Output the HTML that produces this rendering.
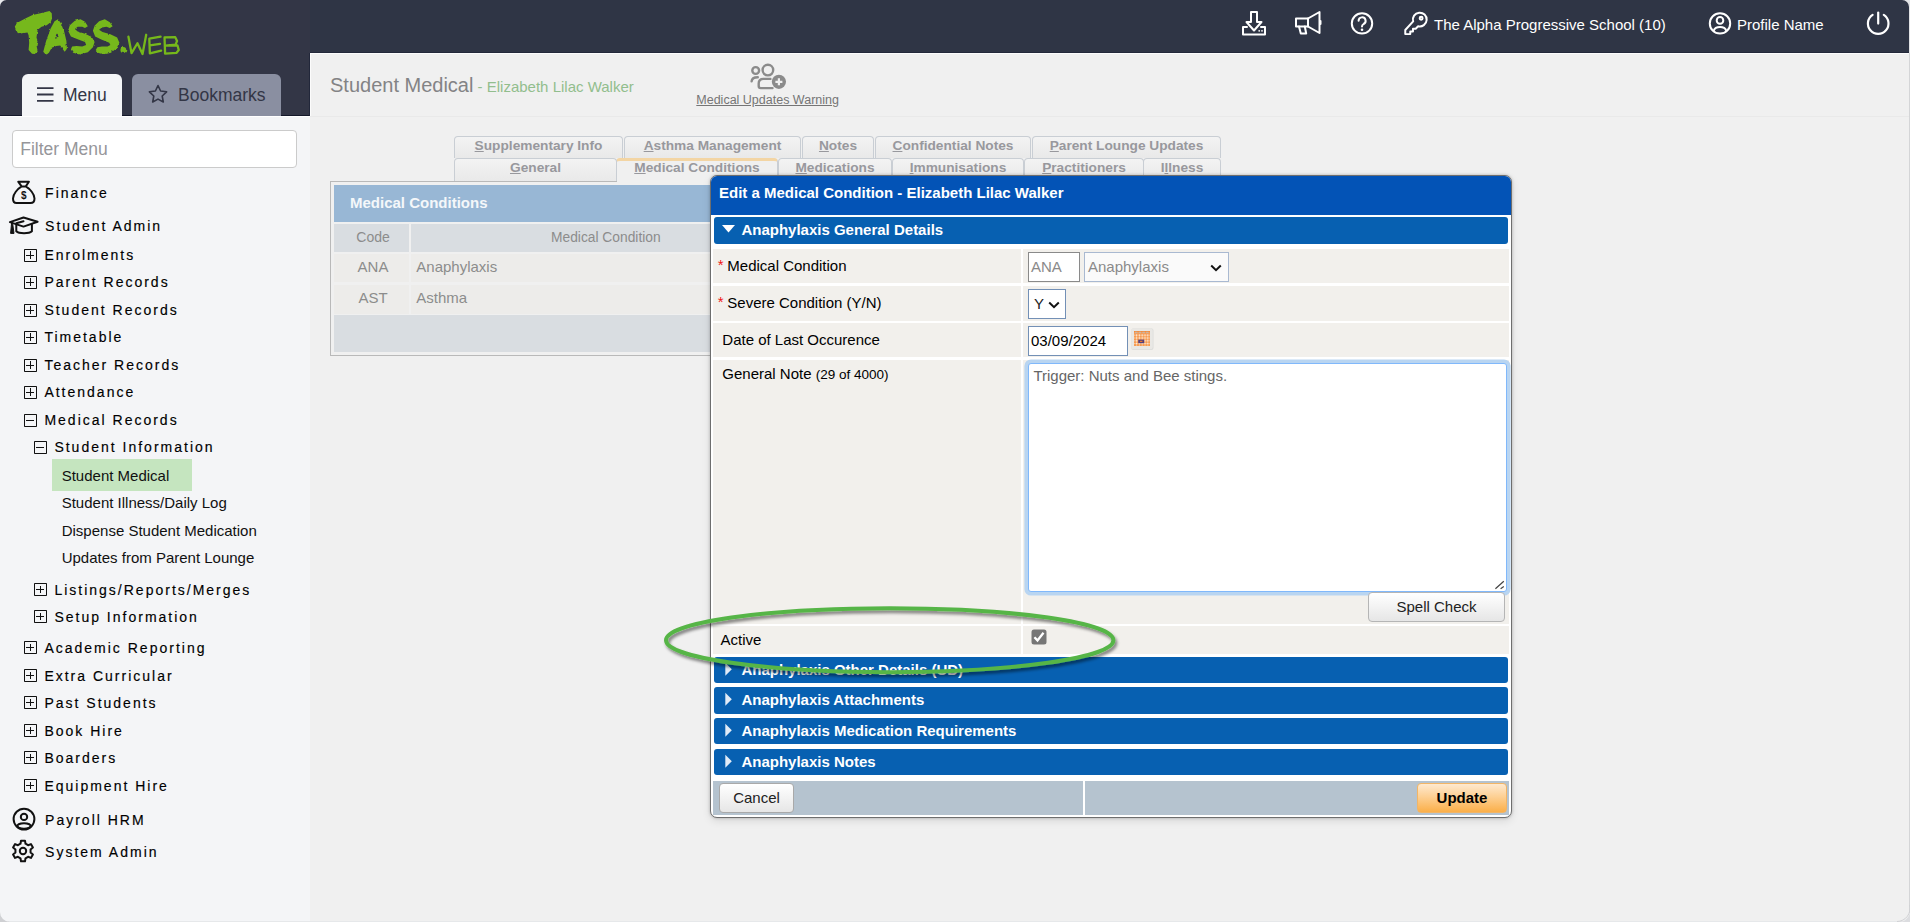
<!DOCTYPE html>
<html>
<head>
<meta charset="utf-8">
<title>Student Medical</title>
<style>
*{box-sizing:border-box;margin:0;padding:0}
html,body{width:1910px;height:922px;overflow:hidden}
body{font-family:"Liberation Sans",sans-serif;background:#f0f0f0;position:relative;color:#000}
.abs{position:absolute}
#hdr{position:absolute;left:0;top:0;width:1910px;height:53px;background:linear-gradient(90deg,#333646 0,#333646 310px,#2f3545 310px)}
#hl2{position:absolute;left:310px;top:52px;width:1600px;height:1px;background:#23283a}
#sidehdr{position:absolute;left:0;top:53px;width:310px;height:63px;background:#333646;border-bottom:1px solid #14182a;border-right:1px solid #22273a}
#side{position:absolute;left:0;top:116px;width:310px;height:806px;background:#f4f5f7;border-top:1px solid #fff}
.tabM{position:absolute;left:22px;top:74px;width:100px;height:42px;background:#f4f5f7;border-radius:6px 6px 0 0;color:#333646;font-size:17.5px}
.tabB{position:absolute;left:132px;top:74px;width:148px;height:42px;background:#8a8fa1;border-radius:6px 6px 0 0;color:#333646;font-size:17.5px}
.tabM span,.tabB span{position:absolute;top:10px;line-height:22px;white-space:nowrap}
#filter{position:absolute;left:12px;top:130px;width:285px;height:38px;border:1px solid #cbcbcb;border-radius:4px;background:#fff;font-size:17.500px;color:#96969a;line-height:37.500px;padding-left:7.200px}
.mi{position:absolute;white-space:nowrap;font-size:14px;letter-spacing:2px;line-height:20px;color:#000;-webkit-text-stroke:0.150px #000;margin:-1.200px 0 0 0.400px}
.leaf{position:absolute;white-space:nowrap;font-size:15px;line-height:20px;color:#111;left:61.700px}
.bx{position:absolute;width:13.300px;height:13px;border:1.300px solid #111;border-radius:0.800px;margin-top:-0.700px}
.bx:before{content:"";position:absolute;left:1.350px;top:4.700px;width:8px;height:1.300px;background:#111}
.bx.p:after{content:"";position:absolute;left:4.700px;top:1.300px;width:1.300px;height:7.800px;background:#111}
.hl{position:absolute;left:52px;top:459px;width:140px;height:32px;background:#c5e5bf}
.ht{position:absolute;color:#fff;font-size:15px;line-height:20px;white-space:nowrap;top:15px}

#title{position:absolute;left:330px;top:72px;font-size:20px;line-height:26px;color:#838385;white-space:nowrap}
#title span{font-size:15px;color:#92be8d}
#sep{position:absolute;left:310px;top:116px;width:1600px;height:1px;background:#e9e9e9}
#wl1{position:absolute;left:310px;top:53px;width:1600px;height:1px;background:#fcfcfc}
#wl2{position:absolute;left:310px;top:53px;width:1px;height:63px;background:#fcfcfc}
#muw{position:absolute;left:696.300px;top:93.100px;font-size:12.500px;line-height:14px;color:#757575;text-decoration:underline;white-space:nowrap}
.tb{position:absolute;height:22px;border:1px solid #c9ced4;border-bottom:none;border-radius:4px 4px 0 0;background:linear-gradient(#f3f3f3,#e9e9e9);font-size:13.700px;font-weight:bold;color:#98989d;text-align:center;line-height:17px;white-space:nowrap}
.tb u{text-decoration:underline}
.tb.act{background:#f0f0f0;border-top:3px solid #f3d5a4;line-height:13px;z-index:2}
#mcbox{position:absolute;left:330px;top:181px;width:800px;height:175px;border:1px solid #b9b9b9;background:#f0f0f0}
.c{position:absolute;white-space:nowrap}

#modal{z-index:10;position:absolute;left:710px;top:175px;width:802px;height:643px;border:1px solid #6e6e6e;border-radius:7px;background:#fff;box-shadow:0 0 3px rgba(0,0,0,.25),0 3px 8px rgba(0,0,0,.100);overflow:hidden}
#mtitle{position:absolute;left:0;top:0;width:800px;height:39px;background:#0353b6;color:#fff;font-weight:bold;font-size:15px;line-height:34.600px;padding-left:8px}
.sec{position:absolute;left:3px;width:794px;height:26px;background:#0760b1;border-radius:3px;color:#fff;font-weight:bold;font-size:15px;line-height:26px;padding-left:27.400px;white-space:nowrap}
.sec svg{position:absolute;left:7px;top:0}
.lab{position:absolute;left:2px;width:308px;background:#f2f0ec;font-size:15px;color:#000;white-space:nowrap}
.val{position:absolute;left:312px;width:486px;background:#f2f0ec}
.lab .r{color:#f01616;position:absolute;left:4.800px;margin-top:-1px}
.inp{position:absolute;border:1px solid #7390b6;background:#fff;font-size:15px;line-height:28px;padding-left:2px;white-space:nowrap}
.btn{position:absolute;border:1px solid #b5b5b5;border-radius:4px;background:linear-gradient(#ffffff,#e6e6e6);font-size:15px;color:#222;text-align:center;white-space:nowrap}
</style>
</head>
<body>
<!-- HEADER -->
<div id="hdr"></div>
<!-- logo -->
<svg class="abs" style="left:0;top:0;z-index:2" width="200" height="64" viewBox="0 0 200 64">
 <defs><filter id="rough" x="-5%" y="-10%" width="110%" height="120%"><feTurbulence type="fractalNoise" baseFrequency="0.280" numOctaves="1" seed="11" result="n"/><feDisplacementMap in="SourceGraphic" in2="n" scale="2.600" xChannelSelector="R" yChannelSelector="G"/></filter></defs>
 <g fill="#76b81b" stroke="none" fill-rule="evenodd" filter="url(#rough)">
  <path d="M14.79,26.87 L16.77,22.92 L25.79,18.13 L32.56,15.02 L41.58,13.05 L49.48,11.08 L51.74,13.33 L52.02,18.41 L50.61,22.36 L46.66,25.18 L41.58,26.87 L37.64,29.69 L36.51,37.58 L37.64,40.97 L36.51,45.48 L37.64,51.12 L34.82,53.94 L32.00,53.66 L28.61,49.99 L29.18,42.66 L28.61,35.33 L27.48,32.51 L24.10,33.07 L18.46,34.20 L15.64,29.12 Z M57.94,19.25 L60.76,22.92 L64.15,31.38 L66.40,40.97 L66.97,48.87 L64.71,51.69 L62.45,48.87 L60.20,45.48 L56.25,46.05 L51.74,47.74 L48.92,52.81 L46.10,55.07 L43.28,51.69 L46.10,40.97 L50.61,28.56 L54.56,21.23 Z M55.12,38.71 L58.51,37.87 L57.66,33.64 L56.25,34.20 Z M87.83,26.30 L85.01,21.79 L80.50,19.25 L74.86,20.66 L69.79,25.18 L68.09,30.82 L70.91,36.46 L77.68,39.28 L85.01,42.10 L86.14,44.92 L82.19,46.61 L76.55,46.05 L72.04,46.61 L70.91,49.43 L73.17,52.81 L79.37,54.51 L87.83,52.25 L92.91,47.17 L94.60,42.10 L91.78,37.02 L85.01,33.64 L77.68,31.38 L74.86,29.12 L77.68,26.87 L82.19,26.87 L85.01,28.00 Z M112.64,26.30 L109.82,22.36 L104.74,19.25 L99.10,21.23 L94.59,25.74 L92.90,30.82 L95.15,36.46 L101.92,39.84 L109.25,42.66 L110.38,44.92 L107.56,46.61 L101.92,46.61 L97.41,47.17 L95.72,49.99 L97.97,52.81 L103.61,54.51 L110.94,52.81 L116.58,48.30 L119.40,42.66 L117.15,37.58 L110.38,34.20 L102.48,31.94 L99.10,29.69 L101.92,27.43 L106.43,26.87 L109.82,28.00 Z"/>
  <circle cx="123.35" cy="49.99" r="2.900"/>
 </g>
 <g fill="none" stroke="#76b81b" stroke-width="2.300" stroke-linejoin="round" stroke-linecap="round">
  <path d="M128.43,36.74 L131.53,53.10 L137.45,43.23 L142.53,53.94 L146.20,34.76 M160.58,36.74 L149.30,38.71 L149.86,53.38 L161.14,50.56 M149.86,45.48 L160.01,43.79 M165.09,53.66 L164.53,37.47 L175.24,37.13 L177.05,40.97 L175.52,44.64 L165.65,45.59 L177.50,45.48 L178.74,49.99 L176.37,52.93 L165.09,53.66"/>
 </g>
</svg>
<!-- header icons -->
<svg class="abs" style="left:1241px;top:10px" width="26" height="26" viewBox="0 0 26 26" fill="none" stroke="#fff" stroke-width="2" stroke-linejoin="round" stroke-linecap="round">
 <path d="M10,2 h6 v10 h4.500 l-7.500,8.500 l-7.500,-8.500 h4.500 z"/>
 <path d="M6,17 H2 V24.500 H24 V17 H20"/>
 <path d="M18.200,20.800 h0.010 M21,20.800 h0.010" stroke-width="1.800"/>
</svg>
<svg class="abs" style="left:1294px;top:10.400px" width="28" height="26" viewBox="0 0 28 26" fill="none" stroke="#fff" stroke-width="2" stroke-linejoin="round" stroke-linecap="round">
 <path d="M2,8.500 h12 L25.500,2 V23 L14,16.500 H2 Z"/>
 <path d="M14,8.500 V16.500"/>
 <path d="M5,16.500 l1.800,7 h5.400 l-1.400,-7"/>
 <path d="M26.500,11 v3"/>
</svg>
<svg class="abs" style="left:1349px;top:11px" width="26" height="26" viewBox="0 0 26 26" fill="none" stroke="#fff" stroke-width="2" stroke-linejoin="round" stroke-linecap="round">
 <circle cx="13" cy="12.400" r="10.200"/>
 <path d="M9.600,9.800 a3.500,3.500 0 1 1 5,3.200 c-1,0.600 -1.600,1.200 -1.600,2.600"/>
 <path d="M13,18.800 h0.010" stroke-width="2.600"/>
</svg>
<svg class="abs" style="left:1403.300px;top:10.600px" width="25.400" height="25.400" viewBox="0 0 28 28" fill="none" stroke="#fff" stroke-width="2.200" stroke-linejoin="round" stroke-linecap="round">
 <path d="M11.200,11.500 a7.600,7.600 0 1 1 5.500,5.300 l-2.700,2.700 h-3 v3 h-3 v3 h-5.500 v-4.500 z"/>
 <circle cx="20" cy="8" r="1.600"/>
</svg>
<div class="ht" style="left:1434px">The Alpha Progressive School (10)</div>
<svg class="abs" style="left:1706.500px;top:10px" width="26" height="28" viewBox="0 0 26 28" fill="none" stroke="#fff" stroke-width="2" stroke-linejoin="round" stroke-linecap="round">
 <circle cx="13" cy="13.400" r="10.200"/>
 <circle cx="13" cy="10.400" r="3.300"/>
 <path d="M6.600,20.800 c1,-2.800 3.200,-3.800 6.400,-3.800 s5.400,1 6.400,3.800"/>
</svg>
<div class="ht" style="left:1737px">Profile Name</div>
<svg class="abs" style="left:1864px;top:9px" width="28" height="28" viewBox="0 0 28 28" fill="none" stroke="#fff" stroke-width="2.200" stroke-linecap="round">
 <path d="M14.200,3.500 V14.600"/>
 <path d="M8.600,5.860 a10.300,10.300 0 1 0 11.200,0"/>
</svg>
<div id="sidehdr"></div>
<div id="side"></div>
<div class="tabM"><svg class="abs" style="left:15px;top:13px" width="17" height="15" viewBox="0 0 17 15" stroke="#333646" stroke-width="1.800" fill="none"><path d="M0,1.200 H16.500 M0,7.500 H16.500 M0,13.800 H16.500"/></svg><span style="left:41px">Menu</span></div>
<div class="tabB" style="width:149px"><svg class="abs" style="left:16px;top:10px" width="20" height="20" viewBox="0 0 20 20" stroke="#333646" stroke-width="1.600" fill="none" stroke-linejoin="round"><path d="M10,1.500 L12.600,7 L18.600,7.800 L14.200,12 L15.300,18 L10,15.100 L4.700,18 L5.800,12 L1.400,7.800 L7.400,7 Z"/></svg><span style="left:46px">Bookmarks</span></div>
<div id="filter">Filter Menu</div>

<!-- SIDEBAR ITEMS -->
<div id="sbitems">
<svg class="abs" style="left:10px;top:179px" width="28" height="28" viewBox="0 0 28 28" fill="none" stroke="#111" stroke-width="2" stroke-linejoin="round"><path d="M8.200,2.700 H18.900 L15.800,7.400 C20,10 24.500,15 24.500,19.500 C24.500,22.500 23,24 20.500,24 H6.500 C4,24 3,22.500 3,19.500 C3,15 7.500,10 11.600,7.400 Z M11.600,7.400 H15.800"/><text x="13.700" y="19.700" font-family="Liberation Sans, sans-serif" font-size="10" font-weight="bold" fill="#111" stroke="none" text-anchor="middle">$</text></svg>
<svg class="abs" style="left:8px;top:214px" width="32" height="22" viewBox="0 0 32 22" fill="none" stroke="#111" stroke-width="2" stroke-linejoin="round" stroke-linecap="round"><path d="M1.900,8.100 L15.500,3.500 L29.600,7.700 L15.500,12.600 Z"/><path d="M8.300,10.800 V17.200 C11,19.800 21,19.800 23.900,17.200 V10.400"/><path d="M15.500,7.300 L8.300,9.200"/><path d="M3.600,8.800 L2.600,19.400 H6 L4.600,9.200 Z" fill="#111" stroke-width="1"/></svg>
<svg class="abs" style="left:9.500px;top:805px" width="28" height="28" viewBox="0 0 28 28" fill="none" stroke="#111" stroke-width="2"><defs><clipPath id="uc"><circle cx="14" cy="14.100" r="10.400"/></clipPath></defs><circle cx="14" cy="14.100" r="10.400"/><circle cx="14" cy="11.900" r="3.200"/><ellipse cx="14" cy="21" rx="6.600" ry="2.800" clip-path="url(#uc)"/></svg>
<svg class="abs" style="left:9.200px;top:837.200px" width="28" height="28" viewBox="0 0 28 28" fill="none" stroke="#111" stroke-width="2" stroke-linejoin="round"><path d="M11.49,6.72 L12.00,3.69 L16.00,3.69 L16.51,6.72 L19.05,8.19 L21.92,7.11 L23.93,10.58 L21.56,12.53 L21.56,15.47 L23.93,17.42 L21.92,20.89 L19.05,19.81 L16.51,21.28 L16.00,24.31 L12.00,24.31 L11.49,21.28 L8.95,19.81 L6.08,20.89 L4.07,17.42 L6.44,15.47 L6.44,12.53 L4.07,10.58 L6.08,7.11 L8.95,8.19 Z"/><circle cx="14" cy="14" r="3.200"/></svg>
<div class="hl"></div>
<div class="mi" style="left:44.700px;top:184.5px">Finance</div>
<div class="mi" style="left:44.700px;top:217.5px">Student Admin</div>
<div class="bx p" style="left:24px;top:249.5px"></div><div class="mi" style="left:44px;top:246.5px">Enrolments</div>
<div class="bx p" style="left:24px;top:276.5px"></div><div class="mi" style="left:44px;top:273.5px">Parent Records</div>
<div class="bx p" style="left:24px;top:304.5px"></div><div class="mi" style="left:44px;top:301.5px">Student Records</div>
<div class="bx p" style="left:24px;top:331.5px"></div><div class="mi" style="left:44px;top:328.5px">Timetable</div>
<div class="bx p" style="left:24px;top:359.5px"></div><div class="mi" style="left:44px;top:356.5px">Teacher Records</div>
<div class="bx p" style="left:24px;top:386.5px"></div><div class="mi" style="left:44px;top:383.5px">Attendance</div>
<div class="bx " style="left:24px;top:414.5px"></div><div class="mi" style="left:44px;top:411.5px">Medical Records</div>
<div class="bx p" style="left:24px;top:642px"></div><div class="mi" style="left:44px;top:639px">Academic Reporting</div>
<div class="bx p" style="left:24px;top:670px"></div><div class="mi" style="left:44px;top:667px">Extra Curricular</div>
<div class="bx p" style="left:24px;top:697px"></div><div class="mi" style="left:44px;top:694px">Past Students</div>
<div class="bx p" style="left:24px;top:725px"></div><div class="mi" style="left:44px;top:722px">Book Hire</div>
<div class="bx p" style="left:24px;top:752px"></div><div class="mi" style="left:44px;top:749px">Boarders</div>
<div class="bx p" style="left:24px;top:780px"></div><div class="mi" style="left:44px;top:777px">Equipment Hire</div>
<div class="bx " style="left:34px;top:441.5px"></div><div class="mi" style="left:54px;top:438.5px">Student Information</div>
<div class="bx p" style="left:34px;top:584px"></div><div class="mi" style="left:54px;top:581px">Listings/Reports/Merges</div>
<div class="bx p" style="left:34px;top:611px"></div><div class="mi" style="left:54px;top:608px">Setup Information</div>
<div class="leaf" style="top:465.5px">Student Medical</div>
<div class="leaf" style="top:492.5px">Student Illness/Daily Log</div>
<div class="leaf" style="top:520.5px">Dispense Student Medication</div>
<div class="leaf" style="top:547.5px">Updates from Parent Lounge</div>
<div class="mi" style="left:44.700px;top:811px">Payroll HRM</div>
<div class="mi" style="left:44.700px;top:843px">System Admin</div>
</div>

<!-- MAIN -->
<div id="main">
<div id="title">Student Medical<span> - Elizabeth Lilac Walker</span></div>
<svg class="abs" style="left:748px;top:60px" width="42" height="32" viewBox="748 60 42 32" fill="none" stroke="#8b8b8b" stroke-width="2.400" stroke-linecap="round" stroke-linejoin="round">
<circle cx="755.700" cy="70.500" r="3.400"/><path d="M751.600,81.400 C751.800,78.500 754,77.200 757.800,77.200"/>
<circle cx="767.900" cy="70.100" r="5.300"/><path d="M770.400,78.900 H763.500 C760.500,78.900 758.700,80.600 758.700,83.600 V86 C758.700,87.400 759.400,88.100 760.800,88.100 H772.500"/>
<circle cx="778.900" cy="81.800" r="7.100" fill="#8b8b8b" stroke="none"/><path d="M778.900,78.300 v7 M775.400,81.800 h7" stroke="#f0f0f0" stroke-width="2.200" stroke-linecap="butt"/>
</svg>
<div id="muw">Medical Updates Warning</div>
<div id="hl2"></div><div id="sep"></div><div id="wl1"></div><div id="wl2"></div>
<div class="tb" style="left:454px;top:136px;width:169px"><u>S</u>upplementary Info</div>
<div class="tb" style="left:624px;top:136px;width:177px"><u>A</u>sthma Management</div>
<div class="tb" style="left:802px;top:136px;width:72px"><u>N</u>otes</div>
<div class="tb" style="left:875px;top:136px;width:156px"><u>C</u>onfidential Notes</div>
<div class="tb" style="left:1032px;top:136px;width:189px"><u>P</u>arent Lounge Updates</div>
<div class="tb" style="left:454px;top:158px;width:163px;height:23px"><u>G</u>eneral</div>
<div class="tb act" style="left:616px;top:158px;width:162px;height:23px"><u>M</u>edical Conditions</div>
<div class="tb" style="left:778px;top:158px;width:114px;height:23px"><u>M</u>edications</div>
<div class="tb" style="left:892px;top:158px;width:132px;height:23px"><u>I</u>mmunisations</div>
<div class="tb" style="left:1024px;top:158px;width:120px;height:23px"><u>P</u>ractitioners</div>
<div class="tb" style="left:1143px;top:158px;width:78px;height:23px">I<u>l</u>lness</div>
<div class="abs" style="left:617px;top:181px;width:160px;height:1px;background:#f0f0f0;z-index:3"></div>
<div id="mcbox">
<div class="c" style="left:3px;top:3px;width:800px;height:37px;background:#98b7d5;color:#f4f7fa;font-weight:bold;font-size:15px;line-height:35px;padding-left:16px">Medical Conditions</div>
<div class="c" style="left:3px;top:42px;width:75px;height:28px;background:#d9dde1;color:#8c8c8c;font-size:14px;line-height:26px;text-align:center;padding-left:3px">Code</div>
<div class="c" style="left:80px;top:42px;width:720px;height:28px;background:#d9dde1;color:#8c8c8c;font-size:13.800px;line-height:28px;padding-left:140px">Medical Condition</div>
<div class="c" style="left:3px;top:72px;width:75px;height:28px;background:#edecea;color:#8c8c8c;font-size:15px;line-height:26px;text-align:center;padding-left:3px">ANA</div>
<div class="c" style="left:80px;top:72px;width:720px;height:28px;background:#edecea;color:#8c8c8c;font-size:15px;line-height:26px;padding-left:5.300px">Anaphylaxis</div>
<div class="c" style="left:3px;top:102.500px;width:75px;height:29px;background:#edecea;color:#8c8c8c;font-size:15px;line-height:25px;text-align:center;padding-left:3px">AST</div>
<div class="c" style="left:80px;top:102.500px;width:720px;height:29px;background:#edecea;color:#8c8c8c;font-size:15px;line-height:25px;padding-left:5.300px">Asthma</div>
<div class="c" style="left:3px;top:133.300px;width:797px;height:36.700px;background:#d9dde1"></div>
</div>
</div>
</div>

<!-- MODAL -->
<div id="modal">
<div id="mtitle">Edit a Medical Condition - Elizabeth Lilac Walker</div>
<div class="sec" style="top:41px;height:27px"><svg width="16" height="27" viewBox="0 0 16 27"><path d="M1,8 H14 L7.500,15.500 Z" fill="#fff"/></svg>Anaphylaxis General Details</div>
<div class="lab" style="top:73px;height:34.400px"><span class="r" style="top:7px;line-height:20px">*</span><span class="c" style="left:14.3px;top:7px;line-height:20px">Medical Condition</span></div><div class="val" style="top:73px;height:34.400px"></div>
<div class="lab" style="top:110.200px;height:34.800px"><span class="r" style="top:7px;line-height:20px">*</span><span class="c" style="left:14.3px;top:7px;line-height:20px">Severe Condition (Y/N)</span></div><div class="val" style="top:110.200px;height:34.800px"></div>
<div class="lab" style="top:147px;height:34px"><span class="c" style="left:9.3px;top:7px;line-height:20px">Date of Last Occurence</span></div><div class="val" style="top:147px;height:34px"></div>
<div class="lab" style="top:184px;height:264px"><span class="c" style="left:9.3px;top:4px;line-height:20px">General Note <span style="font-size:13.500px">(29 of 4000)</span></span></div><div class="val" style="top:184px;height:264px"></div>
<div class="lab" style="top:450px;height:28px"><span class="c" style="left:7.600px;top:4px;line-height:20px">Active</span></div><div class="val" style="top:450px;height:28px"></div>
<div class="inp" style="left:317px;top:76px;width:52px;height:30px;color:#8a8a8a;border-color:#8a8a8a">ANA</div>
<div class="inp" style="left:373px;top:76px;width:145px;height:30px;color:#8a8a8a;background:#fafafa;border-color:#a9b9d1;padding-left:3px">Anaphylaxis<svg width="12" height="8" viewBox="0 0 12 8" style="position:absolute;right:6px;top:10.500px" fill="none" stroke="#111" stroke-width="2"><path d="M1.200,1.500 L6,6.200 L10.800,1.500"/></svg></div>
<div class="inp" style="left:317px;top:113px;width:38px;height:30px;color:#222;padding-left:5px">Y<svg width="12" height="8" viewBox="0 0 12 8" style="position:absolute;right:5px;top:10.500px" fill="none" stroke="#111" stroke-width="2"><path d="M1.200,1.500 L6,6.200 L10.800,1.500"/></svg></div>
<div class="inp" style="left:317px;top:150px;width:100px;height:30px;color:#000">03/09/2024</div>
<svg class="abs" style="left:420px;top:152px" width="23" height="22.500" viewBox="0 0 23 22.500"><rect x="0.300" y="0.300" width="22.200" height="21.700" rx="2.500" fill="#dcdcda"/><rect x="0.300" y="0.300" width="21.400" height="20.900" rx="2.500" fill="#e9e8e5"/><rect x="3" y="3" width="16" height="15" fill="#f79b52"/><rect x="3" y="3" width="16" height="1" fill="#f58a3a"/><path d="M4,4.500 h14" stroke="#c9b6a6" stroke-width="1.600" stroke-dasharray="2.500 1.200"/><path d="M3,7.200 H19 M3,10 H19 M3,12.800 H19 M3,15.600 H19 M5.600,6 V18 M8.400,6 V18 M11.200,6 V18 M14,6 V18 M16.800,6 V18" stroke="#fbd0ab" stroke-width="0.700"/><path d="M3,7.200 H19 M3,10 H19 M3,12.800 H19 M3,15.600 H19" stroke="#fff" stroke-width="0.800" stroke-dasharray="0.800 2"  stroke-dashoffset="-2.200"/><rect x="7.200" y="11.600" width="6" height="3.600" fill="#59407a"/><rect x="9" y="12.800" width="2.400" height="1.200" fill="#e8742c"/></svg>
<div class="abs" style="left:317px;top:187px;width:479px;height:229px;background:#fff;border:1px solid #80b8fb;border-radius:3px;box-shadow:0 0 0 3.600px #b9d5f1;font-size:15px;color:#666;line-height:18px;padding:3px 0 0 4.400px;white-space:nowrap">Trigger: Nuts and Bee stings.<svg class="abs" style="right:1px;bottom:1px" width="10" height="10" viewBox="0 0 10 10" stroke="#444" stroke-width="1.200"><path d="M8.800,1.300 L0.400,8.800 M8.800,6.500 L5.600,8.800"/></svg></div>
<div class="btn" style="left:657px;top:416px;width:137px;height:30px;line-height:27px">Spell Check</div>
<svg class="abs" style="left:320px;top:452.500px" width="16" height="16" viewBox="0 0 16 16"><rect x="0.500" y="0.500" width="15" height="15" rx="2.500" fill="#767676"/><path d="M3.400,8.200 L6.500,11.400 L12.500,3.800" fill="none" stroke="#fff" stroke-width="2.300"/></svg>
<div class="sec" style="top:481px"><svg width="16" height="27" viewBox="0 0 16 27"><path d="M4.300,5.800 V18.800 L10.800,12.300 Z" fill="#e1ebf7"/></svg>Anaphylaxis Other Details (UD)</div>
<div class="sec" style="top:511px;height:27px"><svg width="16" height="27" viewBox="0 0 16 27"><path d="M4.300,5.800 V18.800 L10.800,12.300 Z" fill="#e1ebf7"/></svg>Anaphylaxis Attachments</div>
<div class="sec" style="top:542px"><svg width="16" height="27" viewBox="0 0 16 27"><path d="M4.300,5.800 V18.800 L10.800,12.300 Z" fill="#e1ebf7"/></svg>Anaphylaxis Medication Requirements</div>
<div class="sec" style="top:573px"><svg width="16" height="27" viewBox="0 0 16 27"><path d="M4.300,5.800 V18.800 L10.800,12.300 Z" fill="#e1ebf7"/></svg>Anaphylaxis Notes</div>
<div class="abs" style="left:2px;top:605px;width:370px;height:34px;background:#b5c3cf"></div>
<div class="abs" style="left:374px;top:605px;width:424px;height:34px;background:#b5c3cf"></div>
<div class="btn" style="left:8px;top:607px;width:75px;height:30px;line-height:27px;border-color:#a9a9a9">Cancel</div>
<div class="btn" style="left:706px;top:607px;width:90px;height:30px;line-height:28.500px;font-weight:bold;color:#000;border-color:#f2b566;background:linear-gradient(#fee9cf,#fdd094 45%,#fbaf49)">Update</div>
</div>
<svg class="abs" style="left:650px;top:595px;z-index:11" width="480" height="95" viewBox="0 0 480 95"><defs><filter id="sh" x="-5%" y="-20%" width="110%" height="150%"><feDropShadow dx="1.800" dy="2.800" stdDeviation="1.700" flood-color="#000" flood-opacity="0.480"/></filter></defs><ellipse cx="239.700" cy="45.200" rx="223.700" ry="32" fill="none" stroke="#57b547" stroke-width="4" filter="url(#sh)"/></svg>

<svg class="abs" style="left:0;top:0;z-index:50;pointer-events:none" width="1910" height="922" viewBox="0 0 1910 922">
<path d="M0,0 H6.500 A6.500,6.500 0 0 0 0,6.500 Z" fill="#e9eaed"/>
<path d="M1902,0 A7,7 0 0 1 1909,7 V53 H1910 V0 Z" fill="#e2e3e6"/>
<rect x="1909" y="53" width="1" height="860" fill="#d4d5d7"/>
<rect x="8" y="921" width="1894" height="1" fill="#e6e8ea"/>
<path d="M0,922 V912 A10,10 0 0 0 10,922 Z" fill="#cfd0d3"/>
<path d="M1910,922 H1899 A11,11 0 0 0 1910,911 Z" fill="#dcdde0"/>
<path d="M1909.500,905 A13,13 0 0 1 1897,921.500" fill="none" stroke="#d0d1d4" stroke-width="1"/>
</svg>
</body>
</html>
